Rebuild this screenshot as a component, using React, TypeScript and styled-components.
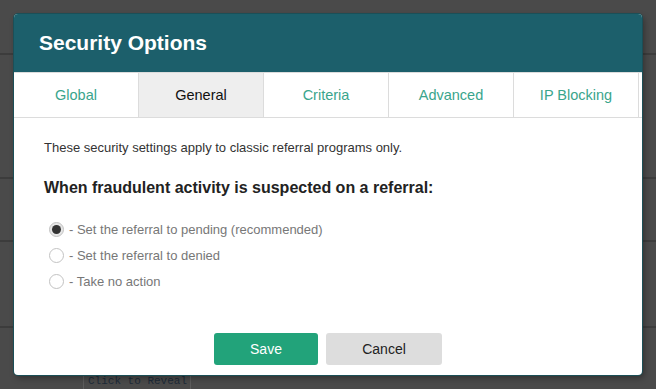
import React from "react";
import styled, { createGlobalStyle } from "styled-components";

const Global = createGlobalStyle`
  html, body { margin: 0; padding: 0; }
  body {
    background: #4a4a4a;
    font-family: "Liberation Sans", Arial, sans-serif;
    width: 656px;
    height: 389px;
    overflow: hidden;
    position: relative;
  }
`;

const Page = styled.div`
  position: relative;
  width: 656px;
  height: 389px;
  display: flex;
  flex-direction: column;
`;

const TopBar = styled.div`
  height: 53px;
  border-bottom: 2px solid #3c3c3c;
  flex: none;
`;

const BgRow = styled.div<{ $h: number }>`
  height: ${(p) => p.$h}px;
  border-bottom: 2px solid #3c3c3c;
  flex: none;
`;

const RevealRow = styled.div`
  padding-left: 83px;
  padding-top: 44px;
`;

const RevealBtn = styled.div`
  width: 108px;
  height: 20px;
  border: 1px solid #5c5c5c;
  border-radius: 2px;
  font-family: "Liberation Mono", monospace;
  font-size: 11px;
  line-height: 12px;
  color: #1e2a38;
  padding: 2px 4px;
  box-sizing: border-box;
  white-space: nowrap;
`;

const Modal = styled.div`
  position: absolute;
  left: 14px;
  top: 14px;
  width: 628px;
  height: 361px;
  background: #fff;
  border-radius: 4px;
  box-shadow: 0 0 0 1px #1b4f57, 2px 3px 6px rgba(0, 0, 0, 0.35);
  overflow: hidden;
  display: flex;
  flex-direction: column;
`;

const Header = styled.div`
  height: 58px;
  background: #1c5f6b;
  display: flex;
  align-items: center;
  padding-left: 25px;
  flex: none;
`;

const Title = styled.h1`
  margin: 0;
  color: #fff;
  font-size: 21px;
  font-weight: bold;
  font-family: "Liberation Sans", Arial, sans-serif;
`;

const Tabs = styled.div`
  display: flex;
  height: 46px;
  border-top: 1px solid #dcdcdc;
  border-bottom: 1px solid #dcdcdc;
  box-sizing: border-box;
  flex: none;
`;

const Tab = styled.div<{ $active?: boolean }>`
  width: 125px;
  box-sizing: border-box;
  border-right: 1px solid #dcdcdc;
  background: ${(p) => (p.$active ? "#eeeeee" : "#fff")};
  color: ${(p) => (p.$active ? "#111" : "#3aa58c")};
  font-size: 14.5px;
  display: flex;
  align-items: center;
  justify-content: center;
`;

const Body = styled.div`
  flex: 1;
  padding: 22px 30px 0 30px;
  display: flex;
  flex-direction: column;
`;

const Intro = styled.p`
  margin: 0;
  font-size: 13px;
  line-height: 16px;
  color: #333;
`;

const Question = styled.h2`
  margin: 22px 0 0 0;
  font-size: 16px;
  line-height: 20px;
  font-weight: bold;
  color: #222;
`;

const Options = styled.div`
  margin-top: 23px;
  display: flex;
  flex-direction: column;
  gap: 10px;
  padding-left: 5px;
`;

const Option = styled.label`
  display: flex;
  align-items: center;
  gap: 5px;
  height: 16px;
  font-size: 13px;
  color: #777;
`;

const Radio = styled.span<{ $checked?: boolean }>`
  width: 15px;
  height: 15px;
  box-sizing: border-box;
  border-radius: 50%;
  border: 1px solid #c2c2c2;
  background: ${(p) => (p.$checked ? "#e6e6e6" : "#fff")};
  display: flex;
  align-items: center;
  justify-content: center;
  flex: none;
  &::after {
    content: "";
    width: 9px;
    height: 9px;
    border-radius: 50%;
    background: ${(p) => (p.$checked ? "#333" : "transparent")};
  }
`;

const Footer = styled.div`
  display: flex;
  justify-content: center;
  gap: 8px;
  padding-bottom: 10px;
`;

const Button = styled.button<{ $primary?: boolean }>`
  height: 32px;
  width: ${(p) => (p.$primary ? 104 : 116)}px;
  border: none;
  border-radius: 3px;
  background: ${(p) => (p.$primary ? "#22a37a" : "#dddddd")};
  color: ${(p) => (p.$primary ? "#fff" : "#222")};
  font-family: "Liberation Sans", Arial, sans-serif;
  font-size: 14px;
  padding: 0;
`;

const tabs = ["Global", "General", "Criteria", "Advanced", "IP Blocking"];
const options = [
  "- Set the referral to pending (recommended)",
  "- Set the referral to denied",
  "- Take no action",
];

export default function App() {
  return (
    <>
      <Global />
      <Page>
        <TopBar />
        <BgRow $h={122} />
        <BgRow $h={61} />
        <BgRow $h={84} />
        <RevealRow>
          <RevealBtn>Click to Reveal</RevealBtn>
        </RevealRow>
        <Modal>
          <Header>
            <Title>Security Options</Title>
          </Header>
          <Tabs>
            {tabs.map((t, i) => (
              <Tab key={t} $active={i === 1}>
                {t}
              </Tab>
            ))}
          </Tabs>
          <Body>
            <Intro>These security settings apply to classic referral programs only.</Intro>
            <Question>When fraudulent activity is suspected on a referral:</Question>
            <Options>
              {options.map((o, i) => (
                <Option key={o}>
                  <Radio $checked={i === 0} />
                  {o}
                </Option>
              ))}
            </Options>
          </Body>
          <Footer>
            <Button $primary>Save</Button>
            <Button>Cancel</Button>
          </Footer>
        </Modal>
      </Page>
    </>
  );
}
